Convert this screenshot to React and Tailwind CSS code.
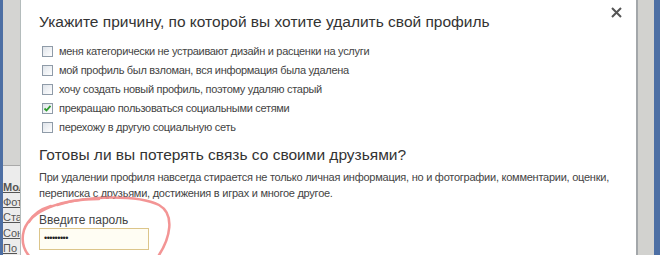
import React from "react";

const reasons = [
  { text: "меня категорически не устраивают дизайн и расценки на услуги", checked: false },
  { text: "мой профиль был взломан, вся информация была удалена", checked: false },
  { text: "хочу создать новый профиль, поэтому удаляю старый", checked: false },
  { text: "прекращаю пользоваться социальными сетями", checked: true },
  { text: "перехожу в другую социальную сеть", checked: false },
];

const sideLinks = ["Мол", "Фот", "Ста", "Сон", "По"];

function Checkbox({ checked }) {
  return (
    <span className="w-[11px] h-[11px] border border-[#8f9ba8] bg-gradient-to-br from-[#dfe4ea] to-white flex items-center justify-center shrink-0">
      {checked && (
        <svg width="9" height="9" viewBox="0 0 9 9">
          <path d="M1.5 4.5 L3.5 6.5 L7.5 1.8" fill="none" stroke="#2f9b2f" strokeWidth="1.8" />
        </svg>
      )}
    </span>
  );
}

function App() {
  return (
    <div className="w-[660px] h-[255px] flex overflow-hidden bg-white text-[#333]" style={{ fontFamily: '"Liberation Sans", Arial, sans-serif' }}>

      {/* left page edge */}
      <div className="w-[3px] bg-[#4d6fa4] shrink-0" />
      <div className="w-[18px] shrink-0 flex flex-col border-r border-[#b4bcbc] overflow-hidden">
        <div className="h-[166px] shrink-0 bg-[#d4d4d2] border-b border-[#a9a9a9]" />
        <div className="flex-1 bg-[#ececec] flex flex-col pt-[13px] overflow-hidden">
          {sideLinks.map((l, i) => (
            <span key={l} className={`text-[11px] leading-[16.5px] underline text-[#555] whitespace-nowrap overflow-hidden ${i === 0 ? "font-bold" : ""}`}>{l}</span>
          ))}
        </div>
      </div>

      {/* dialog */}
      <div className="relative flex-1 bg-white pl-[18px] pt-[12px]">
        <h1 className="text-[15.5px] leading-[20px] text-[#333]">
          Укажите причину, по которой вы хотите удалить свой профиль
        </h1>

        <div className="mt-[10px] flex flex-col">
          {reasons.map((r) => (
            <label key={r.text} className="h-[19px] flex items-center gap-[6px] pl-[3px] text-[11px] tracking-[-0.3px] text-[#444]">
              <Checkbox checked={r.checked} />
              {r.text}
            </label>
          ))}
        </div>

        <h2 className="mt-[8px] text-[15.5px] leading-[20px] text-[#333]">
          Готовы ли вы потерять связь со своими друзьями?
        </h2>

        <p className="mt-[4px] text-[11px] tracking-[-0.25px] leading-[16px] text-[#444] w-[585px]">
          При удалении профиля навсегда стирается не только личная информация, но и фотографии, комментарии, оценки, переписка с друзьями, достижения в играх и многое другое.
        </p>

        <div className="mt-[12px] text-[12px] leading-[14px] text-[#444]">Введите пароль</div>
        <div className="mt-[1px] w-[110px] h-[22px] border border-[#dcc58a] bg-[#fffdf3] flex items-center pl-[4px] text-[9px] tracking-[-0.5px] text-[#222]">
          •••••••••
        </div>

        {/* close */}
        <svg className="absolute left-[590px] top-[7px]" width="11" height="11" viewBox="0 0 11 11">
          <path d="M1 1 L10 10 M10 1 L1 10" stroke="#555" strokeWidth="2" />
        </svg>

        {/* hand-drawn red circle */}
        <svg className="absolute left-[-22px] top-0 pointer-events-none" width="220" height="255" viewBox="0 0 220 255">
          <g fill="none" stroke="#f28a8a" strokeWidth="2.5" strokeLinecap="round" opacity="0.9">
            <path d="M58 205 C90 195, 140 195, 160 205 C176 214, 172 238, 158 258" />
            <path d="M100 199 C62 199, 32 210, 25 230 C21 244, 26 252, 32 258" />
            <path d="M52 206 C42 209, 34 214, 30 222" />
          </g>
        </svg>
      </div>

      {/* right page edge */}
      <div className="w-[2px] bg-[#a3a7aa] shrink-0" />
      <div className="w-[16px] bg-[#d2d2cf] shrink-0" />
      <div className="w-[6px] bg-[#4d6fa4] shrink-0" />
    </div>
  );
}

export default App;
